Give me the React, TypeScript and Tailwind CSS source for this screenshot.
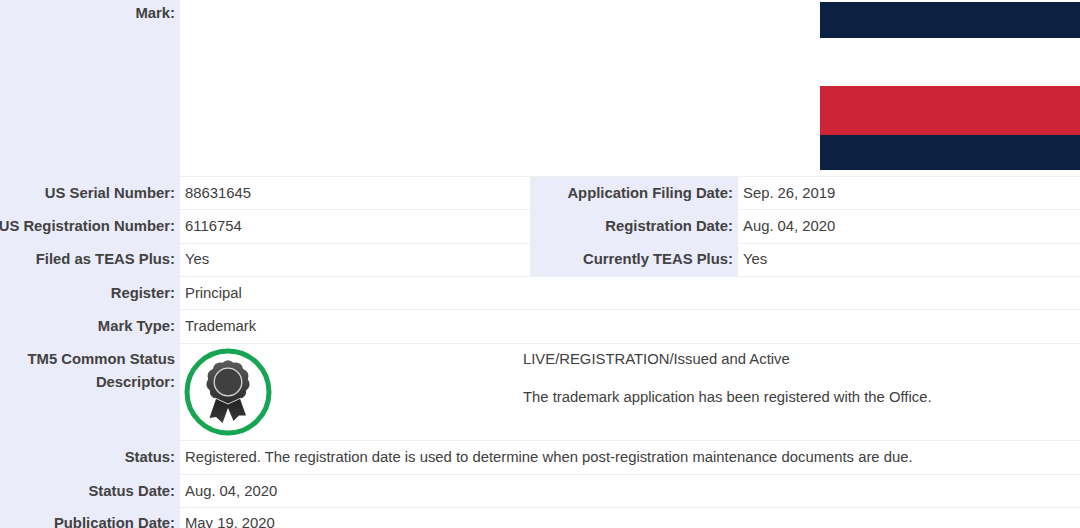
const labelClass = "w-[180px] shrink-0 bg-[#eaecf9] pr-[5px] text-right font-bold text-[#424242] whitespace-nowrap";

function Row({ label, size, children }: { label: string; size: string; children: React.ReactNode }) {
  return (
    <div className={`flex items-stretch ${size}`}>
      <div className={`${labelClass} flex justify-end`}>{label}</div>
      <div className="flex-1 border-b border-[#f0f0f2] pl-[5px] text-[#404040] whitespace-nowrap">{children}</div>
    </div>
  );
}

function DoubleRow({ label, value, label2, value2, size }: { label: string; value: string; label2: string; value2: string; size: string }) {
  return (
    <div className={`flex items-stretch ${size}`}>
      <div className={`${labelClass} flex justify-end`}>{label}</div>
      <div className="w-[350px] shrink-0 border-b border-[#f0f0f2] pl-[5px] text-[#404040]">{value}</div>
      <div className="w-[208px] shrink-0 bg-[#eaecf9] pr-[5px] text-right font-bold text-[#424242] whitespace-nowrap">{label2}</div>
      <div className="flex-1 border-b border-[#f0f0f2] pl-[5px] text-[#404040]">{value2}</div>
    </div>
  );
}

function sealPath(cx: number, cy: number, rIn: number, rOut: number, lobes: number) {
  const pt = (r: number, a: number) => `${(cx + r * Math.sin(a)).toFixed(2)} ${(cy - r * Math.cos(a)).toFixed(2)}`;
  const step = (Math.PI * 2) / lobes;
  let d = `M${pt(rIn, -step / 2)}`;
  for (let i = 0; i < lobes; i++) {
    d += ` Q${pt(rOut, i * step)} ${pt(rIn, i * step + step / 2)}`;
  }
  return d + " Z";
}

function Badge() {
  return (
    <svg width="88" height="88" viewBox="0 0 88 88" className="block">
      <defs>
        <linearGradient id="seal" x1="0" y1="0" x2="0" y2="1">
          <stop offset="0" stopColor="#5c5c5c" />
          <stop offset="1" stopColor="#2c2c2c" />
        </linearGradient>
        <linearGradient id="tail" x1="0" y1="0" x2="0" y2="1">
          <stop offset="0" stopColor="#1f1f1f" />
          <stop offset="1" stopColor="#3a3a3a" />
        </linearGradient>
      </defs>
      <circle cx="44" cy="44" r="41" fill="#fff" stroke="#16a552" strokeWidth="5" />
      <path d="M33 48 L25.5 70 L32 69 L38.5 75 L44 60 L49.5 73 L55 67.5 L62 67.5 L55 48 Z" fill="url(#tail)" />
      <path d={sealPath(44, 34, 20, 24.5, 11)} fill="url(#seal)" />
      <path d="M31 50 L44 56 L57 50" fill="none" stroke="#e6e6e6" strokeWidth="0.9" />
      <circle cx="44" cy="34" r="13.8" fill="#404040" stroke="#d9d9d9" strokeWidth="1.3" />
    </svg>
  );
}

export default function App() {
  return (
    <div className="h-[528px] w-[1080px] overflow-hidden bg-white font-['Liberation_Sans',Arial,sans-serif] text-[14.84px]">
      <div className="flex h-[177px]">
        <div className={`${labelClass} pt-[3px] leading-[20px]`}>Mark:</div>
        <div className="flex flex-1 justify-end border-b border-[#f0f0f2] pt-[2px]">
          <div className="flex h-[168px] w-[260px] flex-col">
            <div className="h-[36px] bg-[#0c2141]" />
            <div className="h-[48px] bg-white" />
            <div className="h-[49px] bg-[#cd2536]" />
            <div className="h-[35px] bg-[#0c2141]" />
          </div>
        </div>
      </div>
      <DoubleRow size="h-[33px] leading-[32px]" label="US Serial Number:" value="88631645" label2="Application Filing Date:" value2="Sep. 26, 2019" />
      <DoubleRow size="h-[34px] leading-[32px]" label="US Registration Number:" value="6116754" label2="Registration Date:" value2="Aug. 04, 2020" />
      <DoubleRow size="h-[33px] leading-[30px]" label="Filed as TEAS Plus:" value="Yes" label2="Currently TEAS Plus:" value2="Yes" />
      <Row size="h-[33px] leading-[32px]" label="Register:">Principal</Row>
      <Row size="h-[34px] leading-[32px]" label="Mark Type:">Trademark</Row>
      <div className="flex h-[97px]">
        <div className={`${labelClass} pt-[4px] leading-[23px]`}>
          TM5 Common Status
          <br />
          Descriptor:
        </div>
        <div className="flex flex-1 border-b border-[#f0f0f2] text-[#404040]">
          <div className="w-[343px] shrink-0 pl-[4px] pt-[4px]">
            <Badge />
          </div>
          <div className="pt-[5px] leading-[20px]">
            <div>LIVE/REGISTRATION/Issued and Active</div>
            <div className="mt-[18px]">The trademark application has been registered with the Office.</div>
          </div>
        </div>
      </div>
      <Row size="h-[34px] leading-[32px]" label="Status:">Registered. The registration date is used to determine when post-registration maintenance documents are due.</Row>
      <Row size="h-[33px] leading-[32px]" label="Status Date:">Aug. 04, 2020</Row>
      <Row size="h-[33px] leading-[30px]" label="Publication Date:">May 19, 2020</Row>
    </div>
  );
}
